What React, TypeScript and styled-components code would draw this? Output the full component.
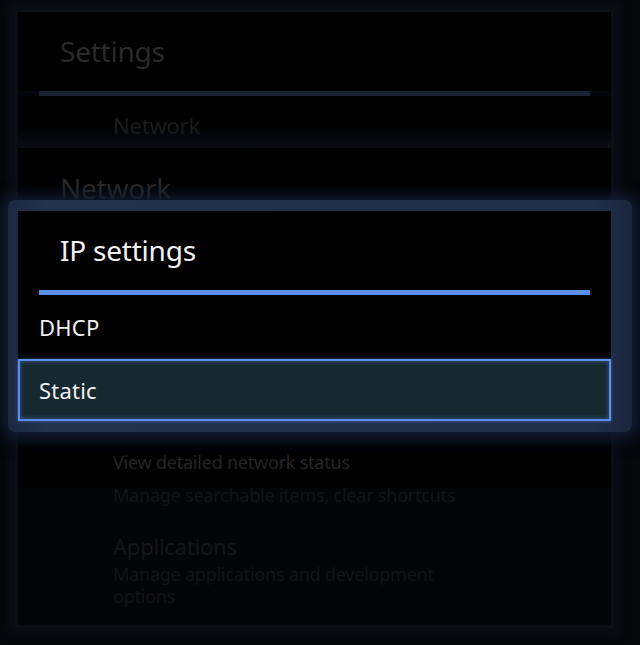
import React from "react";
import styled, { createGlobalStyle } from "styled-components";

const Global = createGlobalStyle`
  html, body { margin: 0; padding: 0; background: #06080c; }
  body { font-family: "Noto Sans", "Open Sans", sans-serif; letter-spacing: -0.014em; }
  * { box-sizing: border-box; }
`;

const Screen = styled.div`
  position: relative;
  width: 640px;
  height: 645px;
  overflow: hidden;
  background: #06080c;
  padding: 12px 29px 20px 18px;
`;

const BackPanel = styled.div`
  width: 593px;
  height: 613px;
  background: #040508;
  display: flex;
  flex-direction: column;
  box-shadow: 0 0 0 3px #0b0e15, 0 0 8px 9px #0a0d14;
  overflow: hidden;
`;

const Header = styled.div<{ $bright?: boolean }>`
  height: 79px;
  display: flex;
  align-items: center;
  padding-left: 42px;
  padding-bottom: 1px;
  font-size: 28px;
  color: ${(p) => (p.$bright ? "#f2f2f2" : "#2a2a2a")};
  background: #000;
`;

const Divider = styled.div<{ $bright?: boolean }>`
  height: 5px;
  margin: 0 21px;
  background: ${(p) => (p.$bright ? "#5b8de9" : "#1a2334")};
  flex: none;
`;

const NavRow = styled.div`
  height: 52px;
  display: flex;
  align-items: center;
  padding-left: 95px;
  padding-top: 6px;
  font-size: 22px;
  color: #1b1b1b;
  background: linear-gradient(#000 0%, #000 55%, #0b0d14 100%);
`;

const SubPane = styled.div`
  height: 340px;
  background: #000;
  display: flex;
  flex-direction: column;
  justify-content: space-between;
  flex: none;
`;

const SubTitle = styled.div`
  padding: 22px 0 0 42px;
  font-size: 28px;
  line-height: 36px;
  color: #2a2a2a;
`;

const SubItem = styled.div`
  padding: 0 0 14px 95px;
  font-size: 18px;
  line-height: 24px;
  color: #252525;
`;

const ListItem = styled.div`
  padding-left: 95px;
  display: flex;
  flex-direction: column;
`;

const ItemTitle = styled.div`
  font-size: 22px;
  line-height: 30px;
  margin-bottom: 2px;
  color: #161616;
`;

const ItemSummary = styled.div`
  font-size: 18px;
  line-height: 22px;
  color: #131313;
  max-width: 340px;
`;

const SummaryOnly = styled(ItemSummary)`
  max-width: none;
  margin-bottom: 25px;
  margin-top: -4px;
`;

const DialogFrame = styled.div`
  position: absolute;
  left: 8px;
  top: 200px;
  width: 624px;
  height: 232px;
  border-radius: 7px;
  padding: 11px 21px 11px 10px;
  background: linear-gradient(90deg, #1d2942 0%, #23314d 6%, #212e49 94%, #1b263e 100%);
  box-shadow: 0 0 14px 6px rgba(18, 28, 50, 0.85), 0 6px 16px 4px rgba(10, 16, 30, 0.9);
`;

const Dialog = styled.div`
  width: 593px;
  height: 210px;
  background: #000;
  display: flex;
  flex-direction: column;
  border-radius: 2px;
`;

const Option = styled.div<{ $selected?: boolean }>`
  height: ${(p) => (p.$selected ? "62px" : "64px")};
  display: flex;
  align-items: center;
  padding-left: ${(p) => (p.$selected ? "19px" : "21px")};
  font-size: 22px;
  letter-spacing: 0.01em;
  color: #f0f0f0;
  background: ${(p) => (p.$selected ? "#162830" : "#000")};
  border: ${(p) => (p.$selected ? "2px solid #5b8ff0" : "none")};
  box-shadow: ${(p) =>
    p.$selected ? "inset 0 0 4px 1px rgba(91, 143, 240, 0.35), 0 0 3px rgba(91,143,240,0.6)" : "none"};
`;

export default function App() {
  return (
    <>
      <Global />
      <Screen>
        <BackPanel>
          <Header>Settings</Header>
          <Divider />
          <NavRow>Network</NavRow>
          <SubPane>
            <SubTitle>Network</SubTitle>
            <SubItem>View detailed network status</SubItem>
          </SubPane>
          <ListItem>
            <SummaryOnly>Manage searchable items, clear shortcuts</SummaryOnly>
          </ListItem>
          <ListItem>
            <ItemTitle>Applications</ItemTitle>
            <ItemSummary>Manage applications and development options</ItemSummary>
          </ListItem>
        </BackPanel>
        <DialogFrame>
          <Dialog>
            <Header $bright>IP settings</Header>
            <Divider $bright />
            <Option>DHCP</Option>
            <Option $selected>Static</Option>
          </Dialog>
        </DialogFrame>
      </Screen>
    </>
  );
}
